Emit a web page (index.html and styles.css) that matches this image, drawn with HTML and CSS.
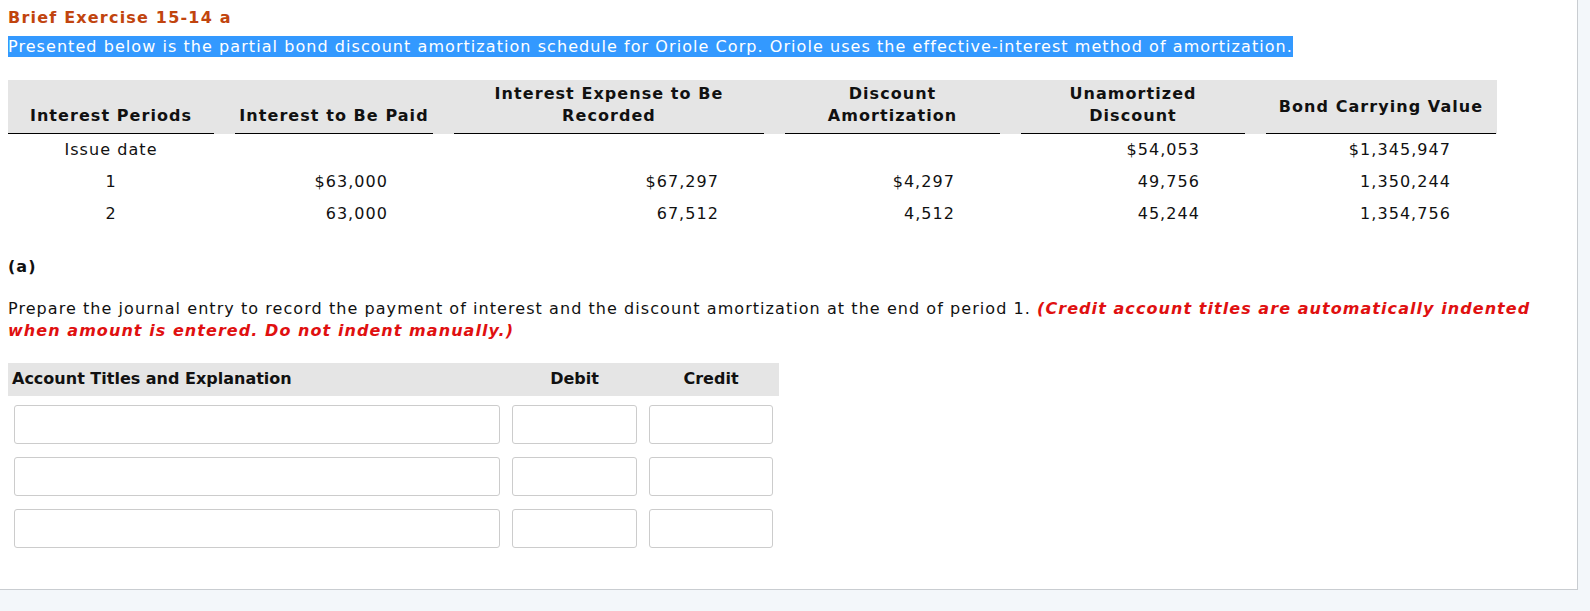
FILE: index.html
```html
<!DOCTYPE html>
<html>
<head>
<meta charset="utf-8">
<link rel="stylesheet" href="styles.css">
</head>
<body>
<div class="panel">
  <div class="title">Brief Exercise 15-14 a</div>
  <div class="intro"><span class="sel">Presented below is the partial bond discount amortization schedule for Oriole Corp. Oriole uses the effective-interest method of amortization.</span></div>

  <div class="schedule">
    <div class="sched-head">
      <div class="th th-bottom">Interest Periods</div>
      <div class="th th-bottom">Interest to Be Paid</div>
      <div class="th th-bottom">Interest Expense to Be<br>Recorded</div>
      <div class="th th-bottom">Discount<br>Amortization</div>
      <div class="th th-bottom">Unamortized<br>Discount</div>
      <div class="th th-middle">Bond Carrying Value</div>
    </div>
    <div class="sched-row">
      <div class="td center">Issue date</div>
      <div class="td num"></div>
      <div class="td num"></div>
      <div class="td num"></div>
      <div class="td num">$54,053</div>
      <div class="td num">$1,345,947</div>
    </div>
    <div class="sched-row">
      <div class="td center">1</div>
      <div class="td num">$63,000</div>
      <div class="td num">$67,297</div>
      <div class="td num">$4,297</div>
      <div class="td num">49,756</div>
      <div class="td num">1,350,244</div>
    </div>
    <div class="sched-row">
      <div class="td center">2</div>
      <div class="td num">63,000</div>
      <div class="td num">67,512</div>
      <div class="td num">4,512</div>
      <div class="td num">45,244</div>
      <div class="td num">1,354,756</div>
    </div>
  </div>

  <div class="part">(a)</div>
  <p class="question">Prepare the journal entry to record the payment of interest and the discount amortization at the end of period 1. <em class="note">(Credit account titles are automatically indented when amount is entered. Do not indent manually.)</em></p>

  <div class="journal">
    <div class="j-head">
      <div class="jh jh-left">Account Titles and Explanation</div>
      <div class="jh">Debit</div>
      <div class="jh">Credit</div>
    </div>
    <div class="j-row">
      <div class="jc"><input class="field" type="text"></div>
      <div class="jc"><input class="field" type="text"></div>
      <div class="jc"><input class="field" type="text"></div>
    </div>
    <div class="j-row">
      <div class="jc"><input class="field" type="text"></div>
      <div class="jc"><input class="field" type="text"></div>
      <div class="jc"><input class="field" type="text"></div>
    </div>
    <div class="j-row">
      <div class="jc"><input class="field" type="text"></div>
      <div class="jc"><input class="field" type="text"></div>
      <div class="jc"><input class="field" type="text"></div>
    </div>
  </div>
</div>
</body>
</html>
```
FILE: styles.css
```css
html, body {
  margin: 0;
  padding: 0;
}
body {
  background: #f3f7fa;
  font-family: "DejaVu Sans", Verdana, sans-serif;
  font-size: 16px;
  line-height: 22px;
  letter-spacing: 1.06px;
  color: #111;
}
.panel {
  width: 1569px;
  background: #fff;
  border-right: 1px solid #c9cdd1;
  border-bottom: 1px solid #c9cdd1;
  padding: 7px 0 37px 8px;
}
.title {
  font-weight: bold;
  color: #c1440e;
  margin-bottom: 7px;
  letter-spacing: 1.2px;
}
.intro {
  margin-bottom: 22px;
}
.sel {
  background: #3399ff;
  color: #fff;
  padding: 1px 0;
}
.schedule {
  width: 1489px;
}
.sched-head,
.sched-row {
  display: grid;
  grid-template-columns: 206px 198px 310px 215px 224px 230px;
  column-gap: 21px;
}
.sched-head {
  background: #e5e5e5;
  height: 54px;
}
.th {
  font-weight: bold;
  text-align: center;
  border-bottom: 1px solid #000;
  display: flex;
  flex-direction: column;
  padding-bottom: 6px;
}
.th-bottom {
  justify-content: flex-end;
}
.th-middle {
  justify-content: center;
  padding-bottom: 0;
}
.sched-row {
  height: 32px;
  line-height: 32px;
}
.td.center {
  text-align: center;
}
.td.num {
  text-align: right;
  padding-right: 45px;
}
.part {
  font-weight: bold;
  margin-top: 26px;
}
.question {
  margin: 20px 0 0 0;
  width: 1540px;
}
.note {
  color: #e01010;
  font-weight: bold;
  font-style: italic;
}
.journal {
  width: 771px;
  margin-top: 21px;
}
.j-head,
.j-row {
  display: grid;
  grid-template-columns: 498px 137px 136px;
}
.j-head {
  background: #e5e5e5;
  height: 33px;
  line-height: 31px;
}
.jh {
  font-weight: bold;
  text-align: center;
  letter-spacing: 0;
}
.jh-left {
  text-align: left;
  padding-left: 4px;
}
.j-row {
  padding: 9px 0 4px;
}
.jc {
  padding: 0 6px;
}
.field {
  box-sizing: border-box;
  display: block;
  width: 100%;
  height: 39px;
  margin: 0;
  border: 1px solid #cccccc;
  border-radius: 3px;
  background: #fff;
}
```
